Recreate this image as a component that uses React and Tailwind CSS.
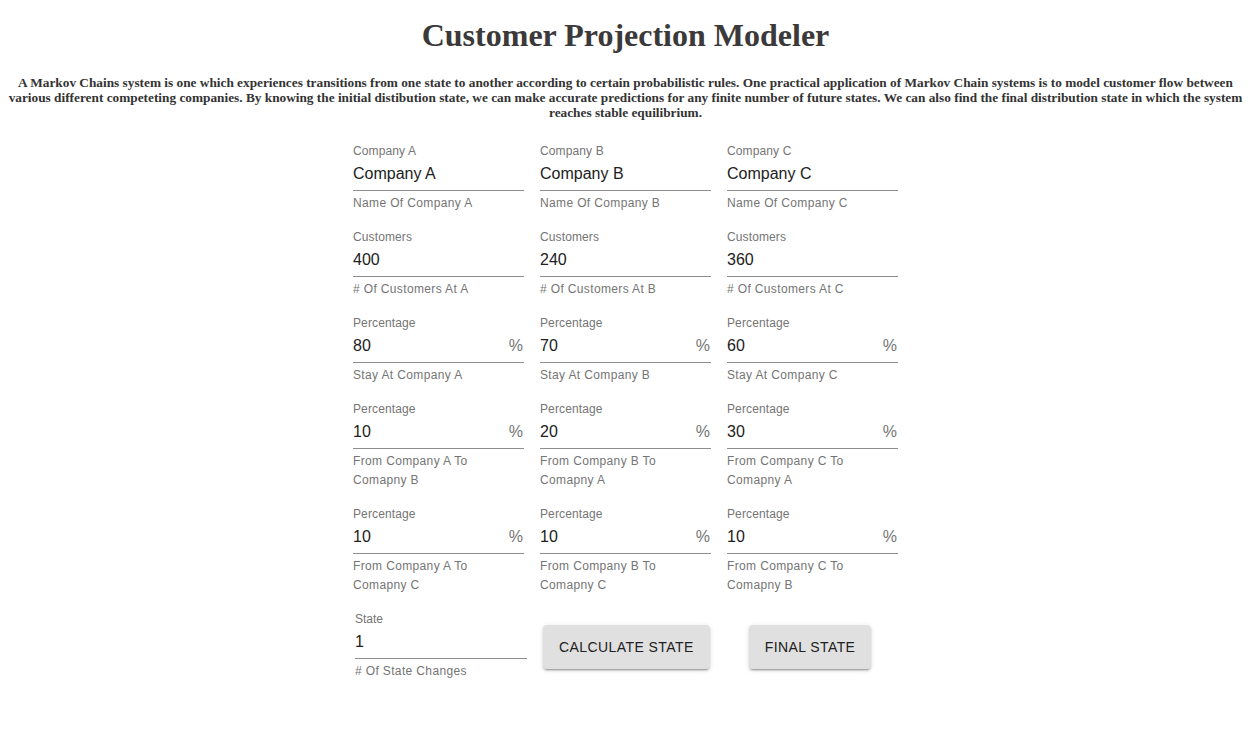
import React from "react";

const sans = { fontFamily: '"Liberation Sans", Arial, Helvetica, sans-serif' };

function Field({ label, value, helper, pct }) {
  return (
    <div className="w-[171px] mb-[17px]" style={sans}>
      <div className="text-[12px] leading-[14px] text-[#757575] tracking-[0.01em]">{label}</div>
      <div className="flex items-center justify-between h-[33px] pb-[1px] border-b border-[#8e8e8e]">
        <span className="text-[16px] text-[#212121]">{value}</span>
        {pct && <span className="text-[16px] text-[#757575] mr-[1px]">%</span>}
      </div>
      <div className="mt-[3px] text-[12px] leading-[19px] text-[#757575] tracking-[0.03em]">
        {helper}
      </div>
    </div>
  );
}

const cols = [
  {
    l: "A",
    name: "Company A",
    cust: "400",
    stay: "80",
    t1: "10",
    h1: ["From Company A To", "Comapny B"],
    t2: "10",
    h2: ["From Company A To", "Comapny C"],
  },
  {
    l: "B",
    name: "Company B",
    cust: "240",
    stay: "70",
    t1: "20",
    h1: ["From Company B To", "Comapny A"],
    t2: "10",
    h2: ["From Company B To", "Comapny C"],
  },
  {
    l: "C",
    name: "Company C",
    cust: "360",
    stay: "60",
    t1: "30",
    h1: ["From Company C To", "Comapny A"],
    t2: "10",
    h2: ["From Company C To", "Comapny B"],
  },
];

function Two({ lines }) {
  return (
    <>
      {lines[0]}
      <br />
      {lines[1]}
    </>
  );
}

function Button({ children, className }) {
  return (
    <button
      className={
        "h-[44px] px-[16px] rounded-[4px] bg-[#e0e0e0] text-[14px] text-[#212121] uppercase tracking-[0.03em] shadow-[0_3px_1px_-2px_rgba(0,0,0,0.2),0_2px_2px_0_rgba(0,0,0,0.14),0_1px_5px_0_rgba(0,0,0,0.12)] " +
        className
      }
      style={sans}
    >
      {children}
    </button>
  );
}

export default function App() {
  return (
    <div className="w-[1251px] min-h-[734px] bg-white">
      <h1
        className="pt-[15px] text-center text-[32px] leading-[40px] font-bold text-[#3b3939]"
        style={{ fontFamily: '"Liberation Serif", "Times New Roman", serif' }}
      >
        Customer Projection Modeler
      </h1>
      <p
        className="mt-[20px] px-[2px] text-center text-[13.3px] leading-[15px] font-bold text-[#333]"
        style={{ fontFamily: '"Liberation Serif", "Times New Roman", serif' }}
      >
        A Markov Chains system is one which experiences transitions from one state to another according to certain
        probabilistic rules. One practical application of Markov Chain systems is to model customer flow between
        <br />
        various different competeting companies. By knowing the initial distibution state, we can make accurate
        predictions for any finite number of future states. We can also find the final distribution state in which the
        system
        <br />
        reaches stable equilibrium.
      </p>
      <div className="mt-[24px] flex justify-center">
        <div className="w-[545px]">
          <div className="flex gap-[16px]">
            {cols.map((c) => (
              <div key={c.l} className="flex flex-col">
                <Field label={`Company ${c.l}`} value={c.name} helper={`Name Of Company ${c.l}`} />
                <Field label="Customers" value={c.cust} helper={`# Of Customers At ${c.l}`} />
                <Field label="Percentage" value={c.stay} pct helper={`Stay At Company ${c.l}`} />
                <Field label="Percentage" value={c.t1} pct helper={<Two lines={c.h1} />} />
                <Field label="Percentage" value={c.t2} pct helper={<Two lines={c.h2} />} />
              </div>
            ))}
          </div>
          <div className="flex items-start">
            <div className="ml-[2px] w-[172px]" style={sans}>
              <div className="text-[12px] leading-[14px] text-[#757575]">State</div>
              <div className="flex items-center h-[33px] pb-[1px] border-b border-[#8e8e8e]">
                <span className="text-[16px] text-[#212121]">1</span>
              </div>
              <div className="mt-[3px] text-[12px] leading-[19px] text-[#757575] tracking-[0.03em]">
                # Of State Changes
              </div>
            </div>
            <Button className="ml-[16px] mt-[13px]">Calculate State</Button>
            <Button className="ml-[39px] mt-[13px]">Final State</Button>
          </div>
        </div>
      </div>
    </div>
  );
}
